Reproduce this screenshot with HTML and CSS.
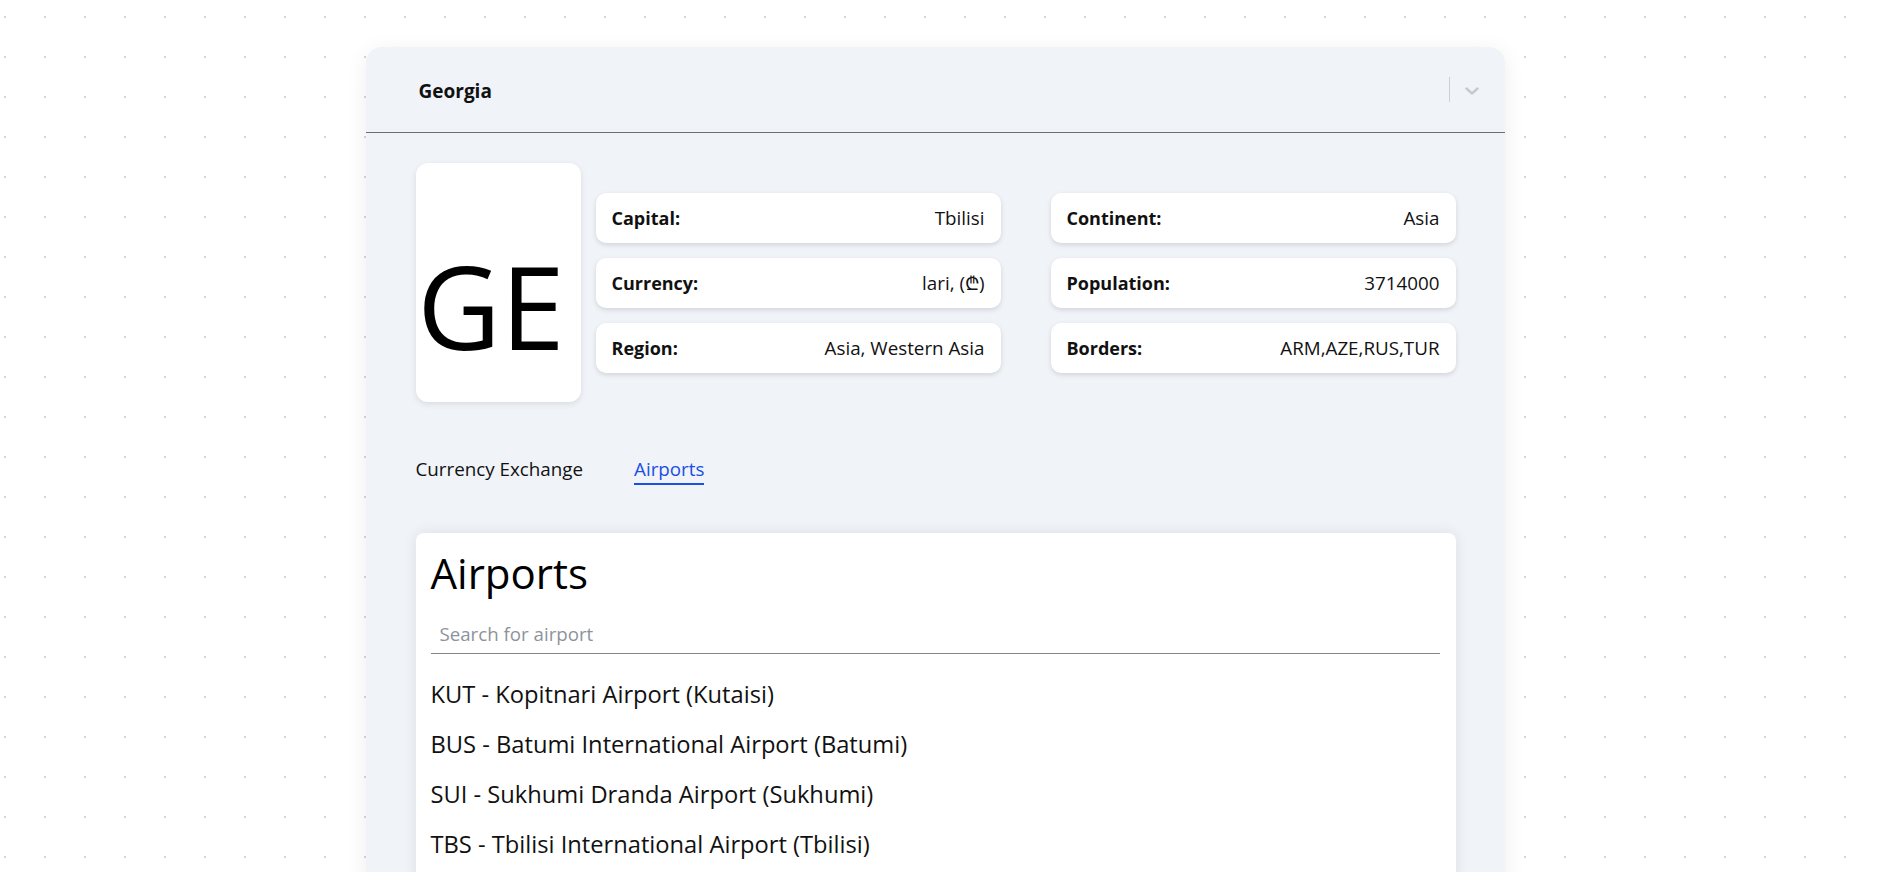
FILE: index.html
```html
<!DOCTYPE html>
<html lang="en">
<head>
<meta charset="utf-8">
<title>Georgia</title>
<link rel="stylesheet" href="styles.css">
</head>
<body>
<div class="page">
  <main class="country-card">
    <header class="country-select">
      <div class="select-value">Georgia</div>
      <span class="select-separator"></span>
      <svg class="select-chevron" width="14" height="8" viewBox="0 0 14 8" aria-hidden="true">
        <polyline points="1.5,1.5 7,6.5 12.5,1.5" fill="none" stroke="#c9c9c9" stroke-width="2.4" stroke-linecap="round" stroke-linejoin="round"/>
      </svg>
    </header>
    <div class="country-body">
      <div class="overview">
        <div class="flag"><span class="flag-code">GE</span></div>
        <div class="facts">
          <div class="fact"><span class="fact-label">Capital:</span><span class="fact-value">Tbilisi</span></div>
          <div class="fact"><span class="fact-label">Currency:</span><span class="fact-value">lari, (₾)</span></div>
          <div class="fact"><span class="fact-label">Region:</span><span class="fact-value">Asia, Western Asia</span></div>
        </div>
        <div class="facts facts-right">
          <div class="fact"><span class="fact-label">Continent:</span><span class="fact-value">Asia</span></div>
          <div class="fact"><span class="fact-label">Population:</span><span class="fact-value">3714000</span></div>
          <div class="fact"><span class="fact-label">Borders:</span><span class="fact-value">ARM,AZE,RUS,TUR</span></div>
        </div>
      </div>
      <nav class="tabs">
        <span class="tab">Currency Exchange</span>
        <span class="tab tab-active">Airports</span>
      </nav>
      <section class="airports">
        <h2 class="airports-title">Airports</h2>
        <input class="airport-search" type="text" placeholder="Search for airport">
        <ul class="airport-list">
          <li>KUT - Kopitnari Airport (Kutaisi)</li>
          <li>BUS - Batumi International Airport (Batumi)</li>
          <li>SUI - Sukhumi Dranda Airport (Sukhumi)</li>
          <li>TBS - Tbilisi International Airport (Tbilisi)</li>
        </ul>
      </section>
    </div>
  </main>
</div>
</body>
</html>
```

FILE: styles.css
```css
* {
  box-sizing: border-box;
}

html, body {
  margin: 0;
  height: 100%;
  overflow: hidden;
}

body {
  font-family: "Open Sans", "DejaVu Sans", sans-serif;
  color: #111;
  background-color: #fff;
  background-image: conic-gradient(from 270deg at 2px 2px, #d4d6db 25%, transparent 0);
  background-size: 40px 40px;
  background-position: 4px 16px;
}

.page {
  padding-top: 47px;
}

.country-card {
  width: 1139px;
  margin-left: calc(50% - 575px);
  min-height: 900px;
  background: #f0f3f8;
  border-radius: 16px 16px 0 0;
  box-shadow: 0 4px 22px rgba(0, 0, 0, 0.07);
}

.country-select {
  height: 86px;
  display: flex;
  align-items: center;
  padding: 0 26px 0 53px;
  border-bottom: 1px solid #6e6e6e;
}

.select-value {
  flex: 1;
  font-size: 19px;
  font-weight: 700;
  padding-top: 3px;
}

.select-separator {
  width: 1px;
  height: 25px;
  background: #cfcfcf;
  margin-right: 15px;
}

.select-chevron {
  display: block;
  margin-top: 2px;
}

.country-body {
  padding: 30px 49px 0 50px;
}

.overview {
  display: flex;
  align-items: center;
}

.flag {
  width: 165px;
  height: 239px;
  background: #fff;
  border-radius: 12px;
  box-shadow: 0 2px 6px rgba(0, 0, 0, 0.1);
  display: flex;
  align-items: center;
  justify-content: center;
}

.flag-code {
  font-size: 115px;
  font-weight: 500;
  line-height: 1;
  padding-top: 45px;
  padding-right: 14px;
  color: #000;
}

.facts {
  width: 405px;
  margin-left: 15px;
  display: flex;
  flex-direction: column;
  gap: 15px;
}

.facts-right {
  margin-left: 50px;
}

.fact {
  height: 50px;
  background: #fff;
  border-radius: 10px;
  box-shadow: 0 2px 5px rgba(0, 0, 0, 0.13);
  display: flex;
  align-items: center;
  justify-content: space-between;
  padding: 0 16px;
}

.fact-label {
  font-size: 18px;
  font-weight: 700;
}

.fact-value {
  font-size: 18.8px;
}

.tabs {
  display: flex;
  gap: 51px;
  margin-top: 54px;
}

.tab {
  font-size: 18.8px;
  line-height: 26px;
  padding-bottom: 1px;
  border-bottom: 2px solid transparent;
  color: #111;
}

.tab-active {
  color: #1a4ee4;
  border-bottom-color: #1a4ee4;
}

.airports {
  margin-top: 48px;
  background: #fff;
  border-radius: 8px;
  box-shadow: 0 0 14px rgba(0, 0, 0, 0.09);
  padding: 15px 16px 20px 15px;
}

.airports-title {
  margin: 0;
  font-size: 42px;
  line-height: 50px;
  font-weight: 400;
  color: #000;
}

.airport-search {
  display: block;
  width: 100%;
  height: 41px;
  margin-top: 15px;
  border: 0;
  border-bottom: 1px solid #858585;
  padding: 0 9px;
  font-family: inherit;
  font-size: 18.7px;
  color: #111;
  background: transparent;
  outline: none;
}

.airport-search::placeholder {
  color: #8d939c;
}

.airport-list {
  list-style: none;
  margin: 15px 0 0;
  padding: 0;
}

.airport-list li {
  font-size: 23.7px;
  line-height: 50px;
}
```
